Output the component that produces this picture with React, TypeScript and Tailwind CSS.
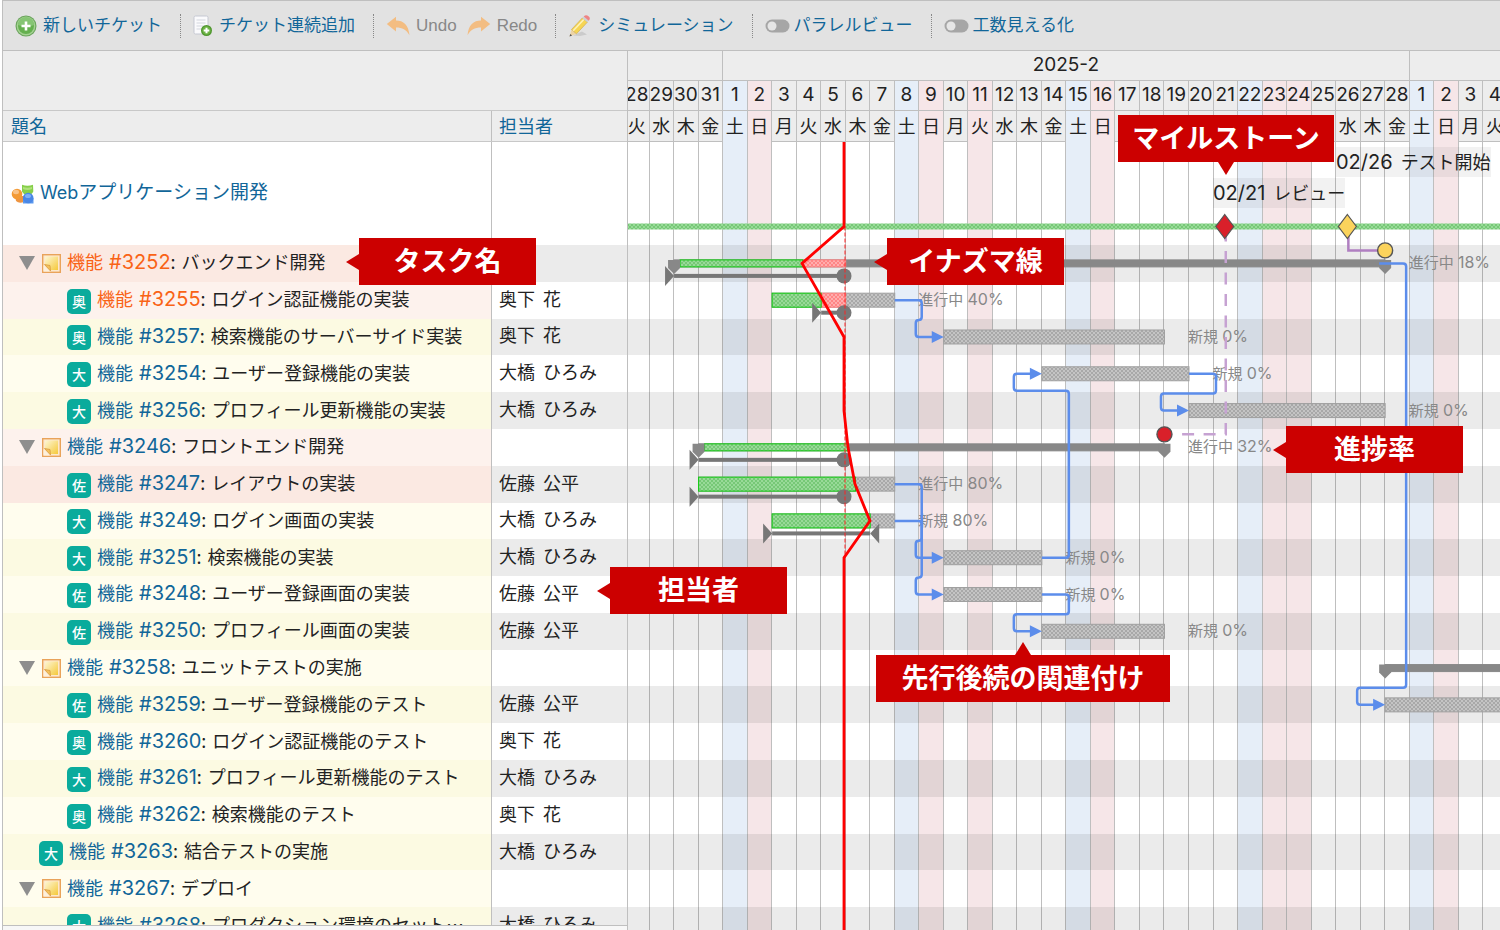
import React from 'react';

const DAY_COUNT = 48;
const CHART_WIDTH = 1177;
const ROWS_HEIGHT = 699;
const PROJECT_HEIGHT = 103;
const TODAY = 219;

type Tone = 'late' | 'normal';

interface Issue {
  id: number;
  subject: string;
  level: 0 | 1;
  parent?: boolean;
  assignee?: string;
  tone?: Tone;
  overdue?: boolean;
}

const issues: Issue[] = [
  { id: 3252, subject: 'バックエンド開発', level: 0, parent: true, tone: 'late', overdue: true },
  { id: 3255, subject: 'ログイン認証機能の実装', level: 1, assignee: '奥下 花', tone: 'late', overdue: true },
  { id: 3257, subject: '検索機能のサーバーサイド実装', level: 1, assignee: '奥下 花' },
  { id: 3254, subject: 'ユーザー登録機能の実装', level: 1, assignee: '大橋 ひろみ' },
  { id: 3256, subject: 'プロフィール更新機能の実装', level: 1, assignee: '大橋 ひろみ' },
  { id: 3246, subject: 'フロントエンド開発', level: 0, parent: true, tone: 'late' },
  { id: 3247, subject: 'レイアウトの実装', level: 1, assignee: '佐藤 公平', tone: 'late' },
  { id: 3249, subject: 'ログイン画面の実装', level: 1, assignee: '大橋 ひろみ' },
  { id: 3251, subject: '検索機能の実装', level: 1, assignee: '大橋 ひろみ' },
  { id: 3248, subject: 'ユーザー登録画面の実装', level: 1, assignee: '佐藤 公平' },
  { id: 3250, subject: 'プロフィール画面の実装', level: 1, assignee: '佐藤 公平' },
  { id: 3258, subject: 'ユニットテストの実施', level: 0, parent: true },
  { id: 3259, subject: 'ユーザー登録機能のテスト', level: 1, assignee: '佐藤 公平' },
  { id: 3260, subject: 'ログイン認証機能のテスト', level: 1, assignee: '奥下 花' },
  { id: 3261, subject: 'プロフィール更新機能のテスト', level: 1, assignee: '大橋 ひろみ' },
  { id: 3262, subject: '検索機能のテスト', level: 1, assignee: '奥下 花' },
  { id: 3263, subject: '結合テストの実施', level: 0, assignee: '大橋 ひろみ' },
  { id: 3267, subject: 'デプロイ', level: 0, parent: true },
  { id: 3268, subject: 'プロダクション環境のセット…', level: 1, assignee: '大橋 ひろみ' },
];

// Day 0 is 2025-01-28
const weekdays = ['火', '水', '木', '金', '土', '日', '月'];
const holidays = [14, 27];
const days = Array.from({ length: DAY_COUNT }, (_, i) => {
  const date = i < 4 ? 28 + i : i < 32 ? i - 3 : i - 31;
  const weekday = weekdays[i % 7];
  const off = weekday === '日' || holidays.includes(i);
  return { date, weekday, kind: off ? 'off' : weekday === '土' ? 'sat' : 'work' };
});

const dayX = (day: number) => (day * CHART_WIDTH) / DAY_COUNT;
const rowY = (row: number) => PROJECT_HEIGHT + ((row + 0.5) * ROWS_HEIGHT) / issues.length;

const dayColor: Record<string, string> = {
  off: 'bg-[#f6e6e8]',
  sat: 'bg-[#e6eef8]',
  work: '',
};

/* ---------- icons ---------- */

const AddIcon = () => (
  <svg width="22" height="22" viewBox="0 0 22 22" aria-hidden="true">
    <circle cx="11" cy="11" r="10.5" fill="#6aa45c" />
    <circle cx="11" cy="11" r="9.4" fill="#a5d293" />
    <circle cx="11" cy="11" r="8" fill="#65b04f" />
    <path d="M3 10a8 8 0 0 1 16 0q-8 3-16 0z" fill="#86c574" />
    <path d="M9.700 6.500h2.600v3.200h3.200v2.600h-3.200v3.200H9.700v-3.200H6.500V9.700h3.200z" fill="#fff" />
  </svg>
);

const AddPageIcon = () => (
  <svg width="20" height="22" viewBox="0 0 20 22" aria-hidden="true">
    <rect x="1" y="1" width="14" height="18" rx="1.500" fill="#fafafc" stroke="#c5c8d2" />
    <path d="M3.500 5h9M3.500 8h9M3.500 11h9M3.500 14h5" stroke="#d3d6de" />
    <circle cx="13.500" cy="15.500" r="5.500" fill="#4f962f" />
    <circle cx="13.500" cy="15.500" r="4.200" fill="#6cb344" />
    <path d="M13.500 12.700v5.600M10.700 15.500h5.600" stroke="#fff" strokeWidth="2" />
  </svg>
);

const UndoIcon = () => (
  <svg width="24" height="20" viewBox="0 0 24 20" aria-hidden="true">
    <path d="M10 .8v3.700c7.500 0 12.500 4.500 13.500 14.700-3.500-5.700-7-7.700-13.500-7.700v4L.8 8z" fill="#f3bd82" />
  </svg>
);

const RedoIcon = () => (
  <svg width="24" height="20" viewBox="0 0 24 20" aria-hidden="true">
    <path d="M14 .8v3.700C6.500 4.500 1.500 9 .5 19.200c3.500-5.700 7-7.700 13.500-7.700v4L23.200 8z" fill="#f3bd82" />
  </svg>
);

const PencilIcon = () => (
  <svg width="24" height="24" viewBox="0 0 24 24" aria-hidden="true">
    <path d="M5 21.500l9-4 5 3-7 1.500z" fill="#cbcbcb" />
    <path d="M1.500 22.500l2-7 5 4.300z" fill="#ecd3a4" />
    <path d="M1.500 22.500l.8-2.600 1.800 1.500z" fill="#555" />
    <path d="M3.500 15.500L14.300 4l5 4.200L8.500 19.800z" fill="#f6d552" stroke="#cdae55" strokeWidth=".7" />
    <path d="M5.200 16.800L15.800 5.500" stroke="#fdf2b8" strokeWidth="1.600" />
    <path d="M14.300 4l1.400-1.500 5 4.200-1.400 1.500z" fill="#ccd1d6" />
    <path d="M15.700 2.500q2.200-2.400 4.800-.3t.2 4.500z" fill="#ef8484" />
  </svg>
);

const ToggleIcon = () => (
  <svg width="25" height="14" viewBox="0 0 25 14" aria-hidden="true">
    <rect x=".5" y=".5" width="24" height="13" rx="6.500" fill="#a6a6a6" />
    <circle cx="7" cy="7" r="4.500" fill="#e6e6e6" />
  </svg>
);

const ProjectIcon = () => (
  <svg width="24" height="20" viewBox="0 0 24 20" aria-hidden="true">
    <path d="M4 12h9v6q-5 2-8-1z" fill="#ee9440" />
    <circle cx="6" cy="10" r="5.300" fill="#f39a35" />
    <ellipse cx="5" cy="8" rx="3" ry="2.200" fill="#f9c388" />
    <path d="M11 .8q5.500 2 11 0l.3 6.700q-1.500 3.500-5.500 3.500T11 7.500z" fill="#86cf4a" />
    <path d="M12 3q4.500 1.500 9 0v2q-4.500 2-9 0z" fill="#b0e27c" />
    <path d="M12 14h10.500v5.500H12z" fill="#5b98ee" />
    <circle cx="17.200" cy="14" r="5.300" fill="#4a87e6" />
    <ellipse cx="17" cy="12" rx="3" ry="2" fill="#7fb0f5" />
  </svg>
);

const NoteIcon = () => (
  <svg width="19" height="19" viewBox="0 0 19 19" aria-hidden="true">
    <defs>
      <linearGradient id="note" x1="0" y1="0" x2="1" y2="1">
        <stop offset="0" stopColor="#fdf6d4" />
        <stop offset="1" stopColor="#f5c93a" />
      </linearGradient>
    </defs>
    <rect x=".7" y=".7" width="17.600" height="17.600" fill="#fde8cc" stroke="#e9a35a" strokeWidth="1.400" />
    <path d="M3 2.500h13v13.500H8L3 11z" fill="url(#note)" />
    <path d="M2.500 10.500l5.500 1 .5 5.500z" fill="#f3c25c" stroke="#d99a40" strokeWidth=".8" />
    <path d="M1.500 11l6.500 6.500H1.500z" fill="#fdf0dc" />
  </svg>
);

/* ---------- toolbar ---------- */

const Separator = () => <span className="mr-3 ml-[18px] h-6 border-l border-dotted border-[#888]" />;

const ToolButton = ({ icon, label, muted }: { icon: React.ReactNode; label: string; muted?: boolean }) => (
  <button type="button" disabled={muted} className={`flex items-center gap-1.5 ${muted ? 'text-[#888]' : 'text-[#169]'}`}>
    {icon}
    {label}
  </button>
);

const ToolSwitch = ({ label }: { label: string }) => (
  <button type="button" role="switch" aria-checked="false" className="flex items-center gap-1 text-[#169]">
    <ToggleIcon />
    {label}
  </button>
);

const Toolbar = () => (
  <header className="flex h-[50px] shrink-0 items-center overflow-hidden border-b border-[#bfbfbf] bg-[#e2e2e2] pl-3 font-['Liberation_Sans','Noto_Sans_CJK_JP',sans-serif] text-[17px] whitespace-nowrap">
    <ToolButton icon={<AddIcon />} label="新しいチケット" />
    <Separator />
    <ToolButton icon={<AddPageIcon />} label="チケット連続追加" />
    <Separator />
    <ToolButton icon={<UndoIcon />} label="Undo" muted />
    <span className="w-2.5" />
    <ToolButton icon={<RedoIcon />} label="Redo" muted />
    <Separator />
    <ToolButton icon={<PencilIcon />} label="シミュレーション" />
    <Separator />
    <ToolSwitch label="パラレルビュー" />
    <Separator />
    <ToolSwitch label="工数見える化" />
  </header>
);

/* ---------- issue list ---------- */

const nameColor = (issue: Issue, striped: boolean) => {
  if (issue.tone === 'late') return striped ? 'bg-[#fbe9e2]' : 'bg-[#fdf2ed]';
  return striped ? 'bg-[#fcfae2]' : 'bg-[#fffdee]';
};

const IssueRow = ({ issue, index }: { issue: Issue; index: number }) => {
  const striped = index % 2 === 0;
  return (
    <tr className="grid grid-cols-[1fr_135px]">
      <td className={`flex min-w-0 items-center overflow-hidden border-r border-[#bfbfbf] whitespace-nowrap ${nameColor(issue, striped)} ${issue.level ? 'pl-16' : issue.parent ? 'pl-4' : 'pl-9'}`}>
        {issue.parent ? (
          <>
            <button type="button" aria-label="折りたたむ" className="mr-[7px]">
              <svg width="16" height="14" viewBox="0 0 16 14">
                <path d="M0 0h16L8 14z" fill="#8e8e8e" />
              </svg>
            </button>
            <NoteIcon />
          </>
        ) : (
          <span className="mt-0.5 flex h-[25px] w-6 items-center justify-center rounded-[5px] bg-[#0aab9c] text-[14px] font-medium text-white">
            {issue.assignee?.charAt(0)}
          </span>
        )}
        <span className="ml-1.5 flex items-baseline pb-0.5 font-['Noto_Sans_CJK_JP',sans-serif]">
          <a href={`#${issue.id}`} className={`flex items-baseline gap-1.5 ${issue.overdue ? 'text-[#f96316]' : 'text-[#169]'}`}>
            機能 <span className="font-['Inter',sans-serif] text-[20px]">#{issue.id}</span>
          </a>
          <span className="mr-1.5">:</span>
          <span>{issue.subject}</span>
        </span>
      </td>
      <td className={`flex items-center gap-2 overflow-hidden pb-0.5 pl-[7px] whitespace-nowrap ${striped ? 'bg-[#ebebeb]' : 'bg-white'}`}>
        {issue.assignee?.split(' ').map((part) => (
          <span key={part}>{part}</span>
        ))}
      </td>
    </tr>
  );
};

const IssueList = () => (
  <div className="flex w-[625px] shrink-0 flex-col border-r border-[#bfbfbf]">
    <div className="min-h-0 flex-1 overflow-hidden border-b border-[#bfbfbf]">
      <table className="flex w-full flex-col text-[18px] text-[#222]">
        <thead className="bg-[#ededed]">
          <tr className="block h-[60px] border-b border-[#c8c8c8]" />
          <tr className="grid h-[31px] grid-cols-[1fr_135px] border-b border-[#c8c8c8]">
            <th className="flex items-center border-r border-[#bfbfbf] pl-2 font-normal">
              <a href="#subject" className="text-[#169]">題名</a>
            </th>
            <th className="flex items-center pl-[7px] font-normal">
              <a href="#assignee" className="text-[#169]">担当者</a>
            </th>
          </tr>
        </thead>
        <tbody>
          <tr className="grid h-[103px] grid-cols-[1fr_135px] bg-white">
            <td className="flex items-center gap-[5px] border-r border-[#bfbfbf] pl-2">
              <ProjectIcon />
              <a href="#project" className="text-[19px] text-[#169]">
                <span className="text-[18px]">Web</span>アプリケーション開発
              </a>
            </td>
            <td />
          </tr>
        </tbody>
        <tbody className="grid h-[699px] grid-rows-[repeat(19,minmax(0,1fr))]">
          {issues.map((issue, i) => (
            <IssueRow key={issue.id} issue={issue} index={i} />
          ))}
        </tbody>
      </table>
    </div>
    <div className="h-1 bg-[#f7f7f7]" />
  </div>
);

/* ---------- gantt chart ---------- */

interface Bar {
  row: number;
  from: number;
  to: number;
  done?: number;
  late?: number;
  parent?: boolean;
  status?: string;
  rate?: string;
}

const bars: Bar[] = [
  { row: 0, from: 2, to: 31, done: 7.25, late: 9, parent: true, status: '進行中', rate: '18%' },
  { row: 1, from: 6, to: 11, done: 8, late: 9, status: '進行中', rate: '40%' },
  { row: 2, from: 13, to: 22, status: '新規', rate: '0%' },
  { row: 3, from: 17, to: 23, status: '新規', rate: '0%' },
  { row: 4, from: 23, to: 31, status: '新規', rate: '0%' },
  { row: 5, from: 3, to: 22, done: 9.1, parent: true, status: '進行中', rate: '32%' },
  { row: 6, from: 3, to: 11, done: 9.4, status: '進行中', rate: '80%' },
  { row: 7, from: 6, to: 11, done: 10, status: '新規', rate: '80%' },
  { row: 8, from: 13, to: 17, status: '新規', rate: '0%' },
  { row: 9, from: 13, to: 17, status: '新規', rate: '0%' },
  { row: 10, from: 17, to: 22, status: '新規', rate: '0%' },
  { row: 11, from: 31, to: 50, parent: true },
  { row: 12, from: 31, to: 50 },
];

const actuals = [
  { row: 0, from: 2 },
  { row: 1, from: 8 },
  { row: 5, from: 3 },
  { row: 6, from: 3 },
  { row: 7, from: 6, to: 10 },
];

const relations = [
  { fromRow: 0, fromX: dayX(31) - 6, toRow: 12, toDay: 31 },
  { fromRow: 1, fromX: dayX(11), toRow: 2, toDay: 13 },
  { fromRow: 3, fromX: dayX(23), toRow: 4, toDay: 23 },
  { fromRow: 8, fromX: dayX(17), toRow: 3, toDay: 17 },
  { fromRow: 6, fromX: dayX(11), toRow: 9, toDay: 13 },
  { fromRow: 7, fromX: dayX(11), toRow: 8, toDay: 13 },
  { fromRow: 9, fromX: dayX(17), toRow: 10, toDay: 17 },
];

// Joins the points with straight lines and rounds each corner
const roundedPath = (points: number[][], radius = 3) =>
  points
    .map(([x, y], i) => {
      if (i === 0) return `M${x} ${y}`;
      if (i === points.length - 1) return `L${x} ${y}`;
      const [px, py] = points[i - 1];
      const [nx, ny] = points[i + 1];
      const ax = x - Math.sign(x - px) * radius;
      const ay = y - Math.sign(y - py) * radius;
      const bx = x + Math.sign(nx - x) * radius;
      const by = y + Math.sign(ny - y) * radius;
      return `L${ax} ${ay}Q${x} ${y} ${bx} ${by}`;
    })
    .join('');

const Checker = ({ id, dark, light }: { id: string; dark: string; light: string }) => (
  <pattern id={id} width="4" height="4" patternUnits="userSpaceOnUse">
    <rect width="4" height="4" fill={light} />
    <path d="M0 0h2v2h-2zM2 2h2v2h-2z" fill={dark} />
  </pattern>
);

const Cap = ({ x, y }: { x: number; y: number }) => (
  <path d={`M${x - 6} ${y - 4}h12v8l-6 6-6-6z`} fill="#888" />
);

const TaskBar = ({ bar }: { bar: Bar }) => {
  const half = bar.parent ? 3.5 : 7;
  const y = rowY(bar.row) - half;
  const height = half * 2;
  const start = dayX(bar.from);
  const end = dayX(bar.to);
  const doneStart = bar.parent ? start + 6 : start;
  const done = bar.done ? dayX(bar.done) : start;
  return (
    <g>
      <rect
        x={start}
        y={y}
        width={end - start}
        height={height}
        fill={bar.parent ? '#888' : 'url(#gray)'}
        stroke={bar.parent ? '#888' : '#a0a0a0'}
      />
      {bar.late && <rect x={done} y={y} width={dayX(bar.late) - done} height={height} fill="url(#red)" stroke="#ff8080" />}
      {bar.done && <rect x={doneStart} y={y} width={done - doneStart} height={height} fill="url(#green)" stroke="#1c1" />}
      {bar.parent && <Cap x={start} y={y + 4} />}
      {bar.parent && <Cap x={end} y={y + 4} />}
      {bar.status && (
        <text x={dayX(bar.to + 1) - 1} y={y + half + 5} fontSize="15" fill="#888">
          {bar.status} <tspan fontSize="16">{bar.rate}</tspan>
        </text>
      )}
    </g>
  );
};

const ActualLine = ({ row, from, to }: { row: number; from: number; to?: number }) => {
  const y = rowY(row) + 12.5;
  const start = dayX(from);
  const end = to ? dayX(to) : TODAY;
  return (
    <g fill="#777">
      <rect x={start} y={y - 2} width={end - start} height="4" />
      <path d={`M${start - 9} ${y - 10}l9 10-9 10z`} />
      {to ? <path d={`M${end + 9} ${y - 10}l-9 10 9 10z`} /> : <circle cx={end} cy={y} r="7.500" />}
    </g>
  );
};

const Relation = ({ fromRow, fromX, toRow, toDay }: { fromRow: number; fromX: number; toRow: number; toDay: number }) => {
  const y1 = rowY(fromRow);
  const y2 = rowY(toRow);
  const x2 = dayX(toDay);
  const turn = y2 > y1 ? y2 - 17 : y2 + 17;
  const path = roundedPath([
    [fromX, y1],
    [fromX + 27, y1],
    [fromX + 27, turn],
    [x2 - 28, turn],
    [x2 - 28, y2],
    [x2 - 10, y2],
  ]);
  return (
    <g>
      <path d={path} fill="none" stroke="#5c8deb" strokeWidth="2.500" />
      <path d={`M${x2 - 12} ${y2 - 6}l12 6-12 6z`} fill="#5c8deb" />
    </g>
  );
};

const Diamond = ({ x, y, fill }: { x: number; y: number; fill: string }) => (
  <path d={`M${x} ${y - 12}l9 12-9 12-9-12z`} fill={fill} stroke="#555" strokeWidth="1.200" />
);

const Chart = () => {
  const top = 84.5;
  const progress = [
    [TODAY, 0],
    [TODAY, top],
    [177, rowY(0)],
    [TODAY, rowY(2)],
    [TODAY, rowY(4)],
    [223, rowY(5)],
    [230, rowY(6)],
    [245, rowY(7)],
    [TODAY, rowY(8)],
    [TODAY, 802],
  ];
  const review = dayX(24.5);
  const test = dayX(29.5);
  return (
    <svg width={CHART_WIDTH} height="802" className="relative block">
      <defs>
        <Checker id="gray" dark="#a8a8a8" light="#c4c4c4" />
        <Checker id="green" dark="#76c876" light="#98da98" />
        <Checker id="red" dark="#ff8585" light="#ffadad" />
      </defs>
      <rect y={top - 3} width={CHART_WIDTH} height="6" fill="url(#green)" />
      {bars.map((bar) => (
        <TaskBar key={bar.row} bar={bar} />
      ))}
      {actuals.map((actual) => (
        <ActualLine key={actual.row} {...actual} />
      ))}
      <path d={`M${test} ${top}V${rowY(0) - 13}H${dayX(31)}`} fill="none" stroke="#b07fc1" strokeWidth="2.500" />
      <path
        d={`M${review} ${top + 3}V${rowY(5) - 13}H${dayX(22) + 8}`}
        fill="none"
        stroke="#c6a2d2"
        strokeWidth="2.500"
        strokeDasharray="12 9.500"
      />
      {relations.map((relation) => (
        <Relation key={`${relation.fromRow}-${relation.toRow}`} {...relation} />
      ))}
      <path d={`M${TODAY + 1} ${top}V${rowY(8)}`} stroke="#f22" strokeDasharray="4 2" />
      <polyline points={progress.join(' ')} fill="none" stroke="#f00" strokeWidth="2.800" />
      <Diamond x={review - 1} y={top} fill="#d9202a" />
      <Diamond x={test - 1} y={top} fill="#fbd35c" />
      <circle cx={dayX(31)} cy={rowY(0) - 13} r="7.500" fill="#fbd35c" stroke="#555" strokeWidth="1.400" />
      <circle cx={dayX(22)} cy={rowY(5) - 13} r="7.500" fill="#d9202a" stroke="#555" strokeWidth="1.400" />
    </svg>
  );
};

const DayHeader = () => (
  <div className="bg-[#ededed] text-[#222]">
    <div className="grid h-[30px] grid-cols-[repeat(48,minmax(0,1fr))] border-b border-[#bfbfbf] text-[19px]">
      <div className="col-span-4 border-r border-[#bfbfbf]" />
      <div className="col-span-28 flex items-center justify-center border-r border-[#bfbfbf]">2025-2</div>
      <div className="col-span-16 flex items-center justify-center">2025-3</div>
    </div>
    <div className="grid h-[30px] grid-cols-[repeat(48,minmax(0,1fr))] text-[19px]">
      {days.map((day, i) => (
        <div key={i} className={`flex items-center justify-center border-r border-b border-[#bfbfbf] ${dayColor[day.kind]}`}>
          {day.date}
        </div>
      ))}
    </div>
    <div className="grid h-[31px] grid-cols-[repeat(48,minmax(0,1fr))] text-[18px]">
      {days.map((day, i) => (
        <div
          key={i}
          className={`flex items-center justify-center border-r border-r-[#bfbfbf] ${dayColor[day.kind]} ${day.kind === 'work' ? 'border-b border-b-[#bfbfbf]' : ''}`}
        >
          {day.weekday}
        </div>
      ))}
    </div>
  </div>
);

const MilestoneLabel = ({ date, name, place }: { date: string; name: string; place: string }) => (
  <span className={`absolute flex h-[30px] items-center gap-2 bg-black/5 text-[18px] whitespace-nowrap text-[#222] ${place}`}>
    <span className="text-[20px]">{date}</span>
    {name}
  </span>
);

const Gantt = () => (
  <div className="min-w-0 flex-1 overflow-hidden">
    <div className="-ml-[3px] w-[1177px]">
      <DayHeader />
      <div className="relative">
        {/* Day columns and row stripes behind the bars */}
        <div className="absolute inset-0 grid grid-cols-[repeat(48,minmax(0,1fr))]">
          {days.map((day, i) => (
            <div key={i} className={`border-r border-[#bfbfbf] ${dayColor[day.kind]}`} />
          ))}
        </div>
        <div className="absolute inset-x-0 bottom-0 grid h-[699px] grid-rows-[repeat(19,minmax(0,1fr))]">
          {issues.map((issue, i) => (
            <div key={issue.id} className={i % 2 === 0 ? 'bg-black/8' : ''} />
          ))}
        </div>
        <Chart />
        <MilestoneLabel date="02/26" name="テスト開始" place="top-[5px] left-[711px]" />
        <MilestoneLabel date="02/21" name="レビュー" place="top-[36px] left-[588px]" />
      </div>
    </div>
  </div>
);

/* ---------- callouts ---------- */

const Callout = ({ label, place, arrow }: { label: string; place: string; arrow: string }) => (
  <div className={`absolute flex h-[47px] items-center justify-center bg-[#c00] pt-0.5 text-[27px] font-bold whitespace-nowrap text-white ${place}`}>
    {label}
    <span className={`absolute border-transparent ${arrow}`} />
  </div>
);

const leftArrow = 'top-4 right-full border-y-8 border-r-[13px] border-r-[#c00]';

const App: React.FC = () => {
  return (
    <div className="relative h-screen overflow-hidden bg-white pl-0.5 font-['Inter','Noto_Sans_CJK_JP',sans-serif]" lang="ja">
      <div className="flex h-full flex-col border-t border-l border-[#bfbfbf]">
        <Toolbar />
        <main className="flex min-h-0 flex-1">
          <IssueList />
          <Gantt />
        </main>
      </div>

      <Callout label="マイルストーン" place="top-[115px] left-[1118px] w-[216px]" arrow="top-full left-[100px] border-x-8 border-t-[13px] border-t-[#c00]" />
      <Callout label="タスク名" place="top-[238px] left-[359px] w-[177px]" arrow={leftArrow} />
      <Callout label="イナズマ線" place="top-[238px] left-[887px] w-[177px]" arrow={leftArrow} />
      <Callout label="進捗率" place="top-[426px] left-[1286px] w-[177px]" arrow={leftArrow} />
      <Callout label="担当者" place="top-[567px] left-[610px] w-[177px]" arrow={leftArrow} />
      <Callout label="先行後続の関連付け" place="top-[655px] left-[876px] w-[294px]" arrow="bottom-full left-[139px] border-x-8 border-b-[13px] border-b-[#c00]" />
    </div>
  );
};

export default App;
